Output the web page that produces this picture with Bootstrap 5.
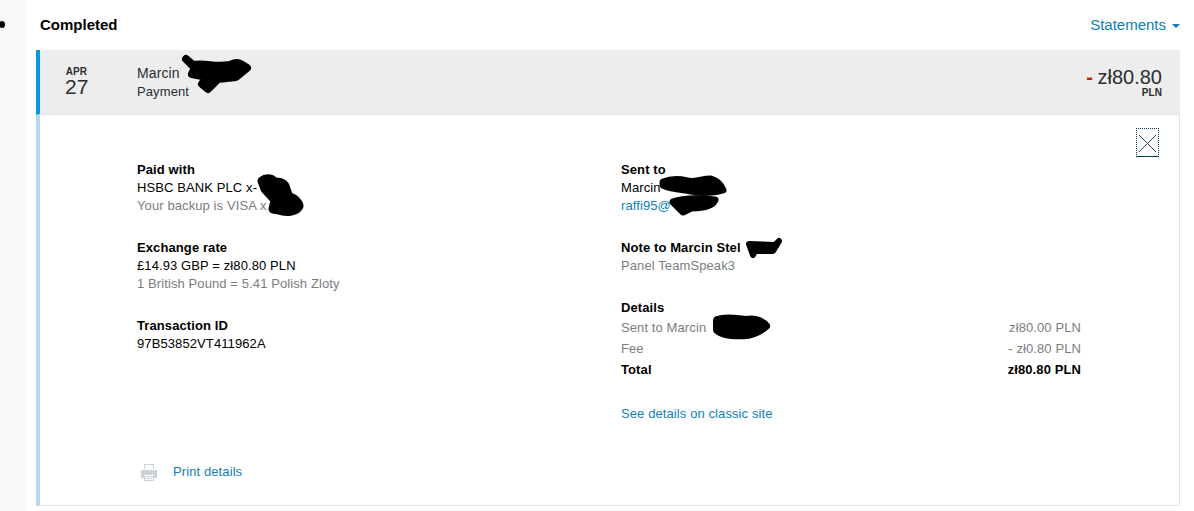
<!DOCTYPE html>
<html lang="en">
<head>
    <meta charset="UTF-8">
    <title>Activity</title>
    <link href="https://cdn.jsdelivr.net/npm/bootstrap@5.3.0/dist/css/bootstrap.min.css" rel="stylesheet">
    <style>
        html, body { height: 100%; }
        body { font-family: "Liberation Sans", Arial, sans-serif; font-size: 13px; line-height: 18px; letter-spacing: .1px; color: #000; overflow: hidden; }
        a { color: #0f7fb8; text-decoration: none; }
        .side-strip { width: 25px; background: #f7f8fa; flex: none; }
        .side-dot { width: 6px; height: 7px; border-radius: 50%; background: #000; margin: 21px 0 0 -1px; }
        .main-col { width: 1144px; margin-left: 11px; }
        .top-head { height: 50px; padding: 16px 0 0 4px; }
        .top-head h2 { font-size: 15px; line-height: 18px; font-weight: 700; margin: 0; letter-spacing: 0; }
        .stmt-link { font-size: 15px; line-height: 18px; letter-spacing: 0; }
        .caret-down { display: inline-block; border: 4px solid transparent; border-top-color: #0f7fb8; border-bottom: 0; margin-left: 6px; vertical-align: 2px; }
        .tx-row { height: 65px; background: #ededed; border-left: 4px solid #009cde; border-bottom: 1px solid #dfe7ec; color: #2c2e2f; padding-right: 18px; }
        .tx-date { width: 97px; padding-left: 25px; }
        .tx-mon { font-size: 10px; line-height: 10px; font-weight: 700; width: 23px; text-align: center; }
        .tx-day { font-size: 21px; line-height: 20px; width: 23px; text-align: center; letter-spacing: 0; }
        .tx-name { font-size: 14px; line-height: 18px; }
        .tx-type { font-size: 13px; line-height: 18px; margin-top: 1px; }
        .tx-amt { font-size: 20px; line-height: 20px; letter-spacing: 0; }
        .tx-minus { color: #b5280f; font-weight: 700; font-size: 20px; margin-right: -1px; }
        .tx-cur { font-size: 10px; line-height: 10px; font-weight: 700; margin-top: 1px; }
        .tx-detail { height: 391px; border-left: 4px solid #b3d9ea; border-right: 1px solid #e5e5e5; border-bottom: 1px solid #e5e5e5; padding: 46px 98px 0 97px; }
        .left-col { width: 484px; flex: none; }
        .right-col { flex: 1; }
        .info-sec { margin-bottom: 24px; }
        .info-head { font-weight: 700; }
        .muted-txt { color: #7a7d80; }
        .detail-lines { margin-top: 2px; }
        .detail-lines div { height: 21px; }
        .classic-link { margin-top: 23px; }
        .close-box { top: 13px; right: 20px; width: 23px; height: 29px; border: 1px dotted #00405f; border-bottom-style: solid; background: none; padding: 0; line-height: 0; }
        .print-line { position: absolute; left: 100px; top: 348px; }
        .print-line a { margin-left: 15px; }
        .ink-wrap { position: relative; }
        .ink { position: absolute; }
        .ink path { fill: #000; stroke: #000; stroke-linecap: round; stroke-linejoin: round; }
    </style>
</head>
<body class="d-flex">
    <div class="side-strip"><div class="side-dot"></div></div>
    <div class="main-col">
        <div class="top-head d-flex justify-content-between">
            <h2>Completed</h2>
            <a href="#" class="stmt-link">Statements<span class="caret-down"></span></a>
        </div>

        <div class="tx-row d-flex align-items-center">
            <div class="tx-date">
                <div class="tx-mon">APR</div>
                <div class="tx-day">27</div>
            </div>
            <div class="flex-grow-1">
                <div class="tx-name ink-wrap">Marcin
                    <svg class="ink" style="left:43px;top:-10px" width="72" height="42" viewBox="0 0 72 42"><path stroke-width="8" d="M6 5 L13 11 C28 9 34 14 50 11 C58 6 62 11 67 14 L56 23 L38 25 L28 35 L22 30 L27 23 L12 20 L15 14 Z"/></svg>
                </div>
                <div class="tx-type">Payment</div>
            </div>
            <div class="text-end">
                <div class="tx-amt"><span class="tx-minus">-</span> zł80.80</div>
                <div class="tx-cur">PLN</div>
            </div>
        </div>

        <div class="tx-detail d-flex position-relative">
            <button type="button" class="close-box position-absolute" aria-label="Close">
                <svg width="21" height="22" viewBox="0 0 21 22"><path d="M2 3 L19 20 M19 3 L2 20" stroke="#33424f" stroke-width="1" fill="none"/></svg>
            </button>

            <div class="left-col">
                <div class="info-sec">
                    <div class="info-head">Paid with</div>
                    <div class="ink-wrap">HSBC BANK PLC x-
                        <svg class="ink" style="left:116px;top:-6px" width="56" height="46" viewBox="0 0 56 46"><path stroke-width="9" d="M9 8 C14 4 20 6 22 10 C26 8 32 10 33 16 L36 24 C40 24 46 30 46 33 C44 38 34 40 26 37 L20 36 L22 27 L12 16 Z"/></svg>
                    </div>
                    <div class="muted-txt">Your backup is VISA x</div>
                </div>
                <div class="info-sec">
                    <div class="info-head">Exchange rate</div>
                    <div>£14.93 GBP = zł80.80 PLN</div>
                    <div class="muted-txt">1 British Pound = 5.41 Polish Zloty</div>
                </div>
                <div class="info-sec">
                    <div class="info-head">Transaction ID</div>
                    <div>97B53852VT411962A</div>
                </div>
            </div>

            <div class="right-col">
                <div class="info-sec">
                    <div class="info-head">Sent to</div>
                    <div class="ink-wrap">Marcin
                        <svg class="ink" style="left:36px;top:-6px" width="72" height="28" viewBox="0 0 72 28"><path stroke-width="7" d="M6 9 C14 6 22 6 30 8 C38 10 44 6 54 6 C60 8 64 12 66 17 C54 21 44 20 34 18 C24 16 14 16 6 12 Z"/></svg>
                    </div>
                    <div class="ink-wrap"><a href="#">raffi95@</a>
                        <svg class="ink" style="left:46px;top:-3px" width="54" height="24" viewBox="0 0 54 24"><path stroke-width="7" d="M6 8 C16 4 32 4 48 6 C46 12 36 14 24 14 L16 18 L10 12 Z"/></svg>
                    </div>
                </div>
                <div class="info-sec">
                    <div class="info-head ink-wrap">Note to Marcin Stel
                        <svg class="ink" style="left:124px;top:-3px" width="38" height="24" viewBox="0 0 38 24"><path stroke-width="6" d="M4 8 L30 9 L34 5 L28 15 L10 15 L8 19 Z"/></svg>
                    </div>
                    <div class="muted-txt">Panel TeamSpeak3</div>
                </div>
                <div class="info-head">Details</div>
                <div class="detail-lines">
                    <div class="d-flex justify-content-between muted-txt">
                        <span class="ink-wrap">Sent to Marcin
                            <svg class="ink" style="left:90px;top:-7px" width="60" height="32" viewBox="0 0 60 32"><path stroke-width="8" d="M6 8 C18 4 28 8 36 8 C44 6 52 10 55 14 C48 20 40 24 30 23 C20 24 10 22 6 18 Z"/></svg>
                        </span>
                        <span>zł80.00 PLN</span>
                    </div>
                    <div class="d-flex justify-content-between muted-txt"><span>Fee</span><span>- zł0.80 PLN</span></div>
                    <div class="d-flex justify-content-between fw-bold"><span>Total</span><span>zł80.80 PLN</span></div>
                </div>
                <div class="classic-link"><a href="#">See details on classic site</a></div>
            </div>

            <div class="print-line d-flex align-items-center">
                <svg width="18" height="18" viewBox="0 0 18 18"><path fill="#c9d4da" d="M4 1h10v5H4z M1 7h16v8h-3v-3H4v3H1z M4 13h10v5H4z"/><path fill="#fff" d="M5 2h8v4H5z M5 14h8v3H5z"/><path fill="#c9d4da" d="M6 15h6v1H6z"/></svg>
                <a href="#">Print details</a>
            </div>
        </div>
    </div>
</body>
</html>
